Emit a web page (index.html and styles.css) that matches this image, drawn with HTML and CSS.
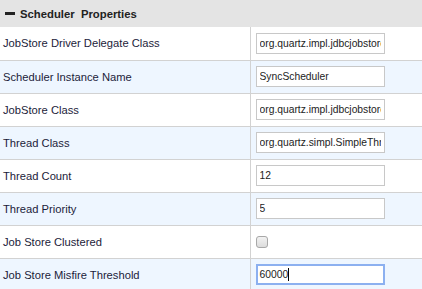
FILE: index.html
```html
<!DOCTYPE html>
<html>
<head>
<meta charset="utf-8">
<link rel="stylesheet" href="styles.css">
</head>
<body>
<div class="panel">
  <div class="panel-head"><span class="minus"></span><span class="title">Scheduler&nbsp; Properties</span></div>
  <table class="props">
    <tr><td class="label">JobStore Driver Delegate Class</td><td class="value"><input class="field" type="text" value="org.quartz.impl.jdbcjobstore.StdJDBCDelegate"></td></tr>
    <tr class="alt"><td class="label">Scheduler Instance Name</td><td class="value"><input class="field" type="text" value="SyncScheduler"></td></tr>
    <tr><td class="label">JobStore Class</td><td class="value"><input class="field" type="text" value="org.quartz.impl.jdbcjobstore.JobStoreTX"></td></tr>
    <tr class="alt"><td class="label">Thread Class</td><td class="value"><input class="field" type="text" value="org.quartz.simpl.SimpleThreadPool"></td></tr>
    <tr><td class="label">Thread Count</td><td class="value"><input class="field" type="text" value="12"></td></tr>
    <tr class="alt"><td class="label">Thread Priority</td><td class="value"><input class="field" type="text" value="5"></td></tr>
    <tr><td class="label">Job Store Clustered</td><td class="value"><span class="check"></span></td></tr>
    <tr class="alt"><td class="label">Job Store Misfire Threshold</td><td class="value"><span class="field focus">60000<span class="caret"></span></span></td></tr>
  </table>
</div>
</body>
</html>
```
FILE: styles.css
```css
html, body { margin: 0; padding: 0; background: #fff; }
body { font-family: "Liberation Sans", Arial, sans-serif; font-size: 11.2px; color: #1c1c3a; }
.panel { width: 422px; }
.panel-head {
  height: 27px; background: #e4e4e4; display: flex; align-items: center;
  padding-left: 5px; box-sizing: border-box;
}
.minus { width: 10px; height: 3px; background: #222; margin-right: 5px; }
.title { font-weight: bold; color: #222; font-size: 11.3px; }
.props { width: 100%; border-collapse: collapse; }
.props td { height: 33px; padding: 0; border-bottom: 1px solid #d2d2d2; box-sizing: border-box; }
.props tr:last-child td { border-bottom: none; }
.props tr.alt td { background: #eef6ff; }
.label { width: 250px; padding-left: 3px !important; border-right: 1px solid #d2d2d2; }
.value { padding-left: 5px !important; }
.field {
  display: flex; align-items: center;
  width: 129px; height: 21px; box-sizing: border-box;
  border: 1px solid #c8c8c8; background: #fff; padding: 0 3px;
  font-family: "Liberation Sans", Arial, sans-serif; font-size: 10.3px; color: #222;
  outline: none; margin: 0;
}
.field.focus { border: 2px solid #8cb0f0; padding-left: 2px; }
.caret { display: inline-block; width: 1px; height: 13px; background: #000; }
.check {
  display: block; width: 12px; height: 12px; box-sizing: border-box;
  border: 1px solid #a8a8a8; border-radius: 3px;
  background: linear-gradient(#f2f2f2, #dcdcdc);
}
```
